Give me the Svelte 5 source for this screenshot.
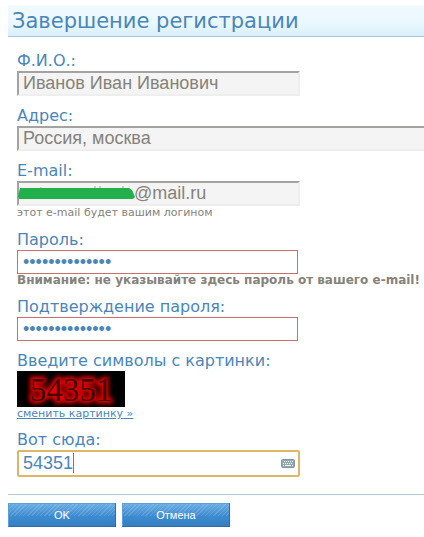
<script>
  let fullName = $state("Иванов Иван Иванович");
  let address = $state("Россия, москва");
  let email = $state("@mail.ru");
  let password = $state("12345678901234");
  let passwordRepeat = $state("12345678901234");
  let captcha = $state("54351");

  const captchaImage = "54351";
  const keys = [3, 5, 7, 9, 11];

  /** @param {SubmitEvent} e */
  function handleSubmit(e) {
    e.preventDefault();
  }
</script>

<form class="registration" onsubmit={handleSubmit}>
  <h1>Завершение регистрации</h1>

  <div class="fields">
    <div class="field">
      <label for="full-name">Ф.И.О.:</label>
      <input id="full-name" class="readonly" type="text" readonly bind:value={fullName} />
    </div>

    <div class="field wide">
      <label for="address">Адрес:</label>
      <input id="address" class="readonly" type="text" readonly bind:value={address} />
    </div>

    <div class="field">
      <label for="email">E-mail:</label>
      <div class="control">
        <input id="email" class="readonly masked" type="text" readonly bind:value={email} />
        <svg class="mask" width="118" height="16" viewBox="0 0 118 16" aria-hidden="true">
          <path d="M24 2v3M78 1v4M83 1v4M106 1v4" stroke="#a5a5a0" stroke-width="1" />
          <path d="M3 3H112L115 5L118 12L116 14H2L1 11Z" fill="#22b04c" />
        </svg>
      </div>
      <small>этот e-mail будет вашим логином</small>
    </div>

    <div class="field">
      <label for="password">Пароль:</label>
      <input id="password" class="secret" type="password" bind:value={password} />
      <small class="warning">Внимание: не указывайте здесь пароль от вашего e-mail!</small>
    </div>

    <div class="field">
      <label for="password-repeat">Подтверждение пароля:</label>
      <input id="password-repeat" class="secret" type="password" bind:value={passwordRepeat} />
    </div>

    <div class="field">
      <span class="caption">Введите символы с картинки:</span>
      <svg class="captcha" width="108" height="36" viewBox="0 0 108 36" role="img" aria-label="Картинка с символами">
        <defs>
          <filter id="glow" x="-20%" y="-30%" width="140%" height="160%">
            <feGaussianBlur stdDeviation="2" />
          </filter>
        </defs>
        <rect width="108" height="36" fill="#000" />
        <text class="digits glow" x="54" y="30" text-anchor="middle" filter="url(#glow)">{captchaImage}</text>
        <text class="digits" x="54" y="30" text-anchor="middle">{captchaImage}</text>
      </svg>
      <a href="#captcha">сменить картинку »</a>
    </div>

    <div class="field">
      <label for="captcha">Вот сюда:</label>
      <div class="control">
        <input id="captcha" class="focused" type="text" autocomplete="off" bind:value={captcha} />
        <span class="caret"></span>
        <svg class="keyboard" width="14" height="9" viewBox="0 0 14 9" aria-hidden="true">
          <rect x="0.5" y="0.5" width="13" height="8" rx="1" fill="#91a8ae" stroke="#7f999f" />
          {#each keys as x}
            <rect {x} y="2" width="1" height="1" fill="#eef5f5" />
            <rect x={x - 1} y="4" width="1" height="1" fill="#eef5f5" />
          {/each}
          <rect x="2" y="6" width="1" height="1" fill="#eef5f5" />
          <rect x="4" y="6" width="6" height="1" fill="#eef5f5" />
          <rect x="11" y="6" width="1" height="1" fill="#eef5f5" />
        </svg>
      </div>
    </div>
  </div>

  <div class="actions">
    <button type="submit">OK</button>
    <button type="button">Отмена</button>
  </div>
</form>

<style>
  :global(body) {
    background: #fff;
    overflow-x: hidden;
  }

  .registration {
    padding: 5px 0 10px 8px;
    color: #4a86b8;
    font-family: Verdana, "DejaVu Sans", sans-serif;
  }

  h1 {
    margin: 0;
    padding: 1px 4px 0;
    border-bottom: 1px solid #a9c9dc;
    background: linear-gradient(180deg, #f0faff 0%, #eaf8fe 60%, #d8effa 100%);
    font-size: 21px;
    font-weight: 400;
    line-height: 30px;
    white-space: nowrap;
  }

  .fields {
    display: flex;
    flex-direction: column;
    gap: 10px;
    padding: 14px 0 17px 9px;
  }

  .field {
    display: flex;
    flex-direction: column;
    align-items: flex-start;
  }

  label,
  .caption {
    font-size: 16px;
    line-height: 20px;
  }

  input {
    display: block;
    box-sizing: border-box;
    width: 283px;
    height: 25px;
    margin: 0;
    padding: 0 5px;
    border: 1px solid #c8706e;
    border-radius: 0;
    outline: none;
    background: #fff;
    color: #4a86b8;
    font-family: "Liberation Sans", Arial, sans-serif;
    font-size: 18px;
  }

  .readonly {
    padding: 0 4px;
    border: 2px solid;
    border-color: #a3a3a1 #eee #eee #a3a3a1;
    background: #f4f4f4;
    color: #85827a;
  }

  .wide {
    margin-right: -2px;
  }

  .wide input {
    width: 100%;
  }

  .secret {
    width: 281px;
    height: 24px;
  }

  .control {
    position: relative;
  }

  .masked {
    padding-left: 115px;
  }

  .mask {
    position: absolute;
    top: 4px;
    left: 0;
  }

  small,
  a {
    font-size: 11px;
    line-height: 14px;
  }

  small {
    color: #85827a;
    white-space: nowrap;
  }

  .warning {
    font-size: 12px;
    font-weight: 700;
  }

  .warning,
  a {
    line-height: 13px;
  }

  .captcha {
    display: block;
  }

  .digits {
    fill: #3c0000;
    font-family: "Liberation Serif", "Times New Roman", serif;
    font-size: 33px;
  }

  .glow {
    fill: #e80000;
    stroke: #e80000;
    stroke-width: 5px;
  }

  a {
    color: #4a86b8;
  }

  .focused {
    height: 27px;
    border: 2px solid #dcb768;
    border-radius: 2px;
    padding: 0 4px;
  }

  .caret {
    position: absolute;
    top: 3px;
    left: 56px;
    width: 1px;
    height: 20px;
    background: #4a86b8;
  }

  .keyboard {
    position: absolute;
    top: 9px;
    right: 5px;
  }

  .actions {
    display: flex;
    gap: 6px;
    padding-top: 8px;
    border-top: 1px solid #b7c8d6;
  }

  button {
    width: 108px;
    height: 24px;
    padding: 0;
    border: 1px solid;
    border-color: #5d9fd8 #2f6ba6 #2f6ba6 #5d9fd8;
    background:
      repeating-linear-gradient(135deg, rgba(255, 255, 255, 0.14) 0 1px, transparent 1px 3px) 0 0 / 100% 12px no-repeat,
      linear-gradient(180deg, #69ace3 0%, #3d8bd0 55%, #347fc4 100%);
    color: #fff;
    font-family: "Liberation Sans", Arial, sans-serif;
    font-size: 11px;
    cursor: pointer;
  }

  button:hover {
    filter: brightness(1.05);
  }
</style>
